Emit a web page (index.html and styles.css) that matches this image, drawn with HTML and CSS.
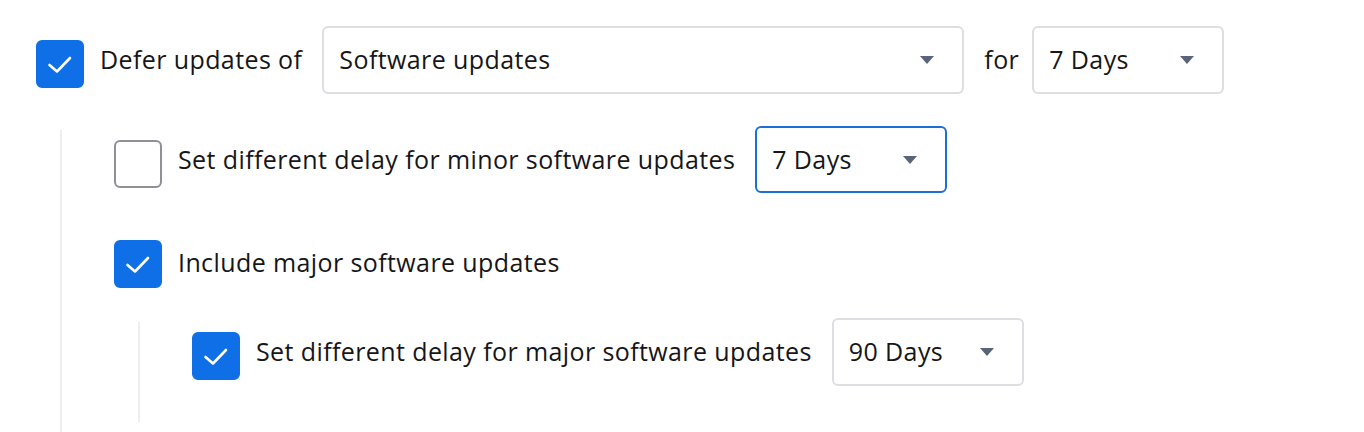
FILE: index.html
```html
<!DOCTYPE html>
<html>
<head>
<meta charset="utf-8">
<link rel="stylesheet" href="styles.css">
</head>
<body>
<div class="root">
  <div class="row">
    <span class="cb checked"><svg viewBox="0 0 48 48"><path d="M13.5 25l7.5 6.5 13-13.5" /></svg></span>
    <span class="label">Defer updates of</span>
    <div class="select wide"><span>Software updates</span><i class="arrow"></i></div>
    <span class="label for">for</span>
    <div class="select"><span>7 Days</span><i class="arrow"></i></div>
  </div>
  <div class="sub">
    <div class="row r2">
      <span class="cb"></span>
      <span class="label">Set different delay for minor software updates</span>
      <div class="select focus"><span>7 Days</span><i class="arrow"></i></div>
    </div>
    <div class="row r3">
      <span class="cb checked"><svg viewBox="0 0 48 48"><path d="M13.5 25l7.5 6.5 13-13.5" /></svg></span>
      <span class="label">Include major software updates</span>
    </div>
    <div class="sub nested">
      <div class="row r4">
        <span class="cb checked"><svg viewBox="0 0 48 48"><path d="M13.5 25l7.5 6.5 13-13.5" /></svg></span>
        <span class="label">Set different delay for major software updates</span>
        <div class="select"><span>90 Days</span><i class="arrow"></i></div>
      </div>
    </div>
  </div>
</div>
</body>
</html>
```

FILE: styles.css
```css
html, body {
  margin: 0;
  padding: 0;
  background: #ffffff;
}
body {
  font-family: "Open Sans", "Noto Sans", sans-serif;
  color: #161618;
  font-size: 25px;
  letter-spacing: 0.4px;
  overflow: hidden;
}
.root {
  padding: 26px 0 0 36px;
}
.row {
  display: flex;
  align-items: center;
}
.cb {
  width: 48px;
  height: 48px;
  box-sizing: border-box;
  border-radius: 6px;
  border: 2px solid #8e9095;
  flex: none;
  margin-right: 16px;
  margin-top: 8px;
  display: flex;
  align-items: center;
  justify-content: center;
}
.cb.checked {
  background: #0f6fe6;
  border-color: #0f6fe6;
}
.cb svg {
  width: 48px;
  height: 48px;
  flex: none;
}
.cb svg path {
  fill: none;
  stroke: #ffffff;
  stroke-width: 2.6;
  stroke-linecap: round;
  stroke-linejoin: round;
}
.label {
  white-space: nowrap;
  margin-right: 20px;
  margin-top: -2px;
}
.label.for {
  margin-left: 20px;
  margin-right: 13px;
}
.select {
  box-sizing: border-box;
  height: 68px;
  width: 192px;
  border: 2px solid #dcdee1;
  border-radius: 6px;
  display: flex;
  align-items: center;
  justify-content: space-between;
  padding: 0 28px 0 15px;
  flex: none;
}
.select span {
  margin-top: -2px;
}
.select.wide {
  width: 642px;
}
.select.focus {
  border-color: #1a6fd8;
  height: 67px;
}
.arrow {
  width: 0;
  height: 0;
  border-left: 7.5px solid transparent;
  border-right: 7.5px solid transparent;
  border-top: 8px solid #5a6478;
}
.sub {
  display: flex;
  flex-direction: column;
  align-items: flex-start;
  margin-left: 24px;
  margin-top: 36px;
  border-left: 2px solid #eceef0;
  padding-left: 52px;
  padding-bottom: 20px;
}
.r2 {
  margin-top: -4px;
}
.r3 {
  margin-top: 39px;
}
.r3 .label {
  margin-top: 4px;
}
.sub.nested {
  margin-left: 24px;
  margin-top: 34px;
  padding-bottom: 36px;
}
.row.r4 {
  margin-top: -4px;
}
```
